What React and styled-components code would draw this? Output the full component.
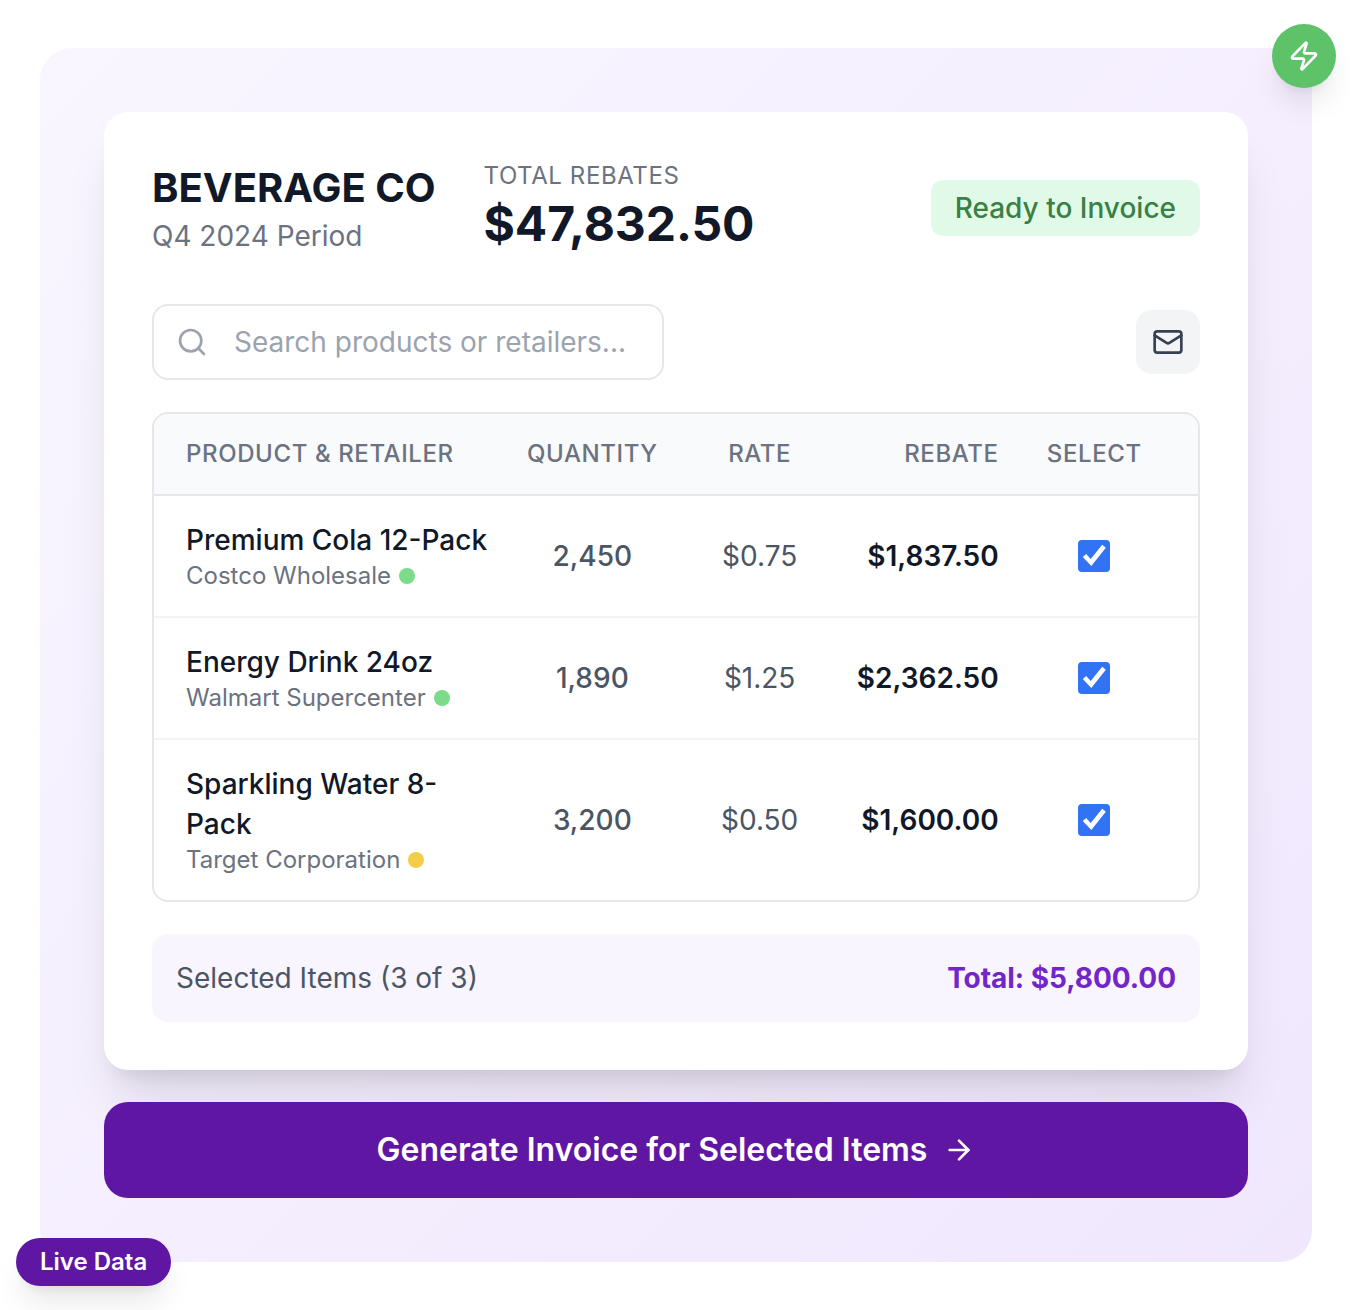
import React, { useState } from "react";
import styled, { createGlobalStyle } from "styled-components";

const GlobalStyle = createGlobalStyle`
  *, *::before, *::after { box-sizing: border-box; }
  body { margin: 0; background: #fff; font-family: Inter, "Liberation Sans", sans-serif; color: #111827; }
  button, input { font: inherit; letter-spacing: inherit; }
`;

const Page = styled.main`
  padding: 48px 46px 48px 40px;
  height: 1310px;
  overflow: hidden;
`;

const Panel = styled.section`
  position: relative;
  height: 1214px;
  padding: 64px;
  border-radius: 32px;
  background: linear-gradient(135deg, #f9f6ff, #f0e7fd);
`;

const Card = styled.article`
  height: 958px;
  padding: 48px;
  margin-bottom: 32px;
  border-radius: 24px;
  background: #fff;
  box-shadow: 0 40px 50px -10px rgba(0, 0, 0, 0.1), 0 16px 20px -12px rgba(0, 0, 0, 0.1);
`;

const Header = styled.header`
  display: flex;
  align-items: center;
  height: 96px;
  margin-bottom: 48px;
`;

const Company = styled.div`
  width: 331.5px;
`;

const CompanyName = styled.h1`
  margin: 0;
  font-size: 40px;
  line-height: 56px;
  font-weight: 700;
`;

const Period = styled.div`
  font-size: 28px;
  line-height: 40px;
  color: #6b7280;
`;

const Label = styled.div`
  font-size: 24px;
  line-height: 32px;
  letter-spacing: 0.6px;
  color: #6b7280;
`;

const Amount = styled.div`
  font-size: 48px;
  line-height: 64px;
  font-weight: 700;
  letter-spacing: -0.08px;
`;

const Status = styled.span`
  margin-left: auto;
  padding: 8px 24px;
  border-radius: 12px;
  background: #e1fae8;
  color: #3a7f44;
  font-size: 28px;
  line-height: 40px;
  font-weight: 500;
`;

const Toolbar = styled.div`
  display: flex;
  align-items: center;
  justify-content: space-between;
  margin-bottom: 32px;
`;

const SearchBox = styled.label`
  display: flex;
  align-items: center;
  gap: 26px;
  width: 512px;
  height: 76px;
  padding: 0 22px;
  border: 2px solid #e5e7eb;
  border-radius: 16px;
  color: #9ca3af;
`;

const SearchInput = styled.input`
  flex: 1;
  min-width: 0;
  padding: 0;
  border: 0;
  outline: 0;
  background: transparent;
  font-size: 28px;
  color: #111827;
  &::placeholder { color: #9ca3af; opacity: 1; }
`;

const MailButton = styled.button`
  display: grid;
  place-items: center;
  width: 64px;
  height: 64px;
  padding: 0;
  border: 0;
  border-radius: 16px;
  background: #f3f4f6;
  color: #374151;
`;

const Table = styled.div`
  overflow: hidden;
  border: 2px solid #e5e7eb;
  border-radius: 16px;
  margin-bottom: 32px;
`;

const Row = styled.div`
  display: grid;
  grid-template-columns: 310.67px repeat(4, 143.33px);
  column-gap: 24px;
  align-items: center;
  height: ${(p) => p.$height}px;
  padding: 0 32px;
  border-bottom: ${(p) => (p.$last ? "0" : "2px solid #f3f4f6")};
`;

const HeadRow = styled(Row)`
  background: #f9fafb;
  border-bottom-color: #e5e7eb;
  color: #6b7280;
  font-size: 24px;
  line-height: 32px;
  font-weight: 500;
  letter-spacing: 0.6px;
`;

const Cell = styled.div`
  text-align: ${(p) => p.$align || "center"};
`;

const Item = styled.div`
  padding-right: 6px;
`;

const Product = styled.div`
  font-size: 28px;
  line-height: 40px;
  font-weight: 500;
`;

const Retailer = styled.div`
  display: flex;
  align-items: center;
  gap: 8px;
  font-size: 24px;
  line-height: 32px;
  color: #6b7280;
`;

const Dot = styled.span`
  width: 16px;
  height: 16px;
  border-radius: 50%;
  background: ${(p) => p.$color};
`;

const Value = styled(Cell)`
  font-size: 28px;
  line-height: 40px;
  font-weight: ${(p) => p.$weight};
  color: ${(p) => p.$color};
`;

const CheckLabel = styled.label`
  display: grid;
  width: 32px;
  height: 32px;
  margin: 0 auto;
  & > * { grid-area: 1 / 1; }
`;

const CheckInput = styled.input`
  appearance: none;
  width: 32px;
  height: 32px;
  margin: 0;
  border: 2px solid #767676;
  border-radius: 4px;
  background: #fff;
  &:checked { border-color: #3273f6; background: #3273f6; }
`;

const CheckMark = styled.svg`
  z-index: 1;
  pointer-events: none;
`;

const Summary = styled.div`
  display: flex;
  align-items: center;
  justify-content: space-between;
  height: 88px;
  padding: 0 24px;
  border-radius: 16px;
  background: #f8f5ff;
  font-size: 28px;
  line-height: 40px;
  color: #4b5563;
`;

const Total = styled.strong`
  font-weight: 700;
  letter-spacing: -0.04px;
  color: #7326c8;
`;

const Generate = styled.button`
  display: flex;
  align-items: center;
  justify-content: center;
  gap: 16px;
  width: 100%;
  height: 96px;
  padding: 0;
  border: 0;
  border-radius: 24px;
  background: #5f16a3;
  color: #fff;
  font-size: 32px;
  line-height: 48px;
  font-weight: 600;
`;

const Floating = styled.div`
  position: absolute;
  color: #fff;
  box-shadow: 0 20px 30px -6px rgba(0, 0, 0, 0.1), 0 8px 12px -8px rgba(0, 0, 0, 0.1);
`;

const Bolt = styled(Floating)`
  top: -24px;
  right: -24px;
  display: grid;
  place-items: center;
  width: 64px;
  height: 64px;
  border-radius: 50%;
  background: #5ec269;
`;

const Live = styled(Floating)`
  left: -24px;
  bottom: -24px;
  padding: 0 24px;
  border-radius: 24px;
  background: #5f16a3;
  font-size: 24px;
  line-height: 48px;
  font-weight: 600;
`;

const Icon = ({ size, children }) => (
  <svg width={size} height={size} viewBox="0 0 24 24" fill="none" stroke="currentColor" strokeWidth="2" strokeLinecap="round" strokeLinejoin="round">
    {children}
  </svg>
);

const Checkbox = ({ checked, onChange }) => (
  <CheckLabel>
    <CheckInput type="checkbox" checked={checked} onChange={onChange} />
    {checked && (
      <CheckMark width="32" height="32" viewBox="0 0 32 32" fill="#fff">
        <path d="M4.8 17 8.2 14 12.7 19 24.2 4.8 27.8 7.8 13.3 26z" />
      </CheckMark>
    )}
  </CheckLabel>
);

const items = [
  { name: "Premium Cola 12-Pack", retailer: "Costco Wholesale", dot: "#7adb89", qty: "2,450", rate: "$0.75", rebate: "$1,837.50", height: 122 },
  { name: "Energy Drink 24oz", retailer: "Walmart Supercenter", dot: "#7adb89", qty: "1,890", rate: "$1.25", rebate: "$2,362.50", height: 122 },
  { name: "Sparkling Water 8-Pack", retailer: "Target Corporation", dot: "#f2cd48", qty: "3,200", rate: "$0.50", rebate: "$1,600.00", height: 160 },
];

export default function App() {
  const [checked, setChecked] = useState([true, true, true]);
  const toggle = (i) => setChecked(checked.map((c, j) => (i === j ? !c : c)));
  return (
    <>
      <GlobalStyle />
      <Page>
        <Panel>
          <Card>
            <Header>
              <Company>
                <CompanyName>BEVERAGE CO</CompanyName>
                <Period>Q4 2024 Period</Period>
              </Company>
              <div>
                <Label>TOTAL REBATES</Label>
                <Amount>$47,832.50</Amount>
              </div>
              <Status>Ready to Invoice</Status>
            </Header>
            <Toolbar>
              <SearchBox>
                <Icon size={32}><circle cx="11" cy="11" r="8" /><path d="m21 21-4.3-4.3" /></Icon>
                <SearchInput placeholder="Search products or retailers..." />
              </SearchBox>
              <MailButton aria-label="Email">
                <Icon size={32}><rect width="20" height="16" x="2" y="4" rx="2" /><path d="m22 7-8.97 5.7a1.94 1.94 0 0 1-2.06 0L2 7" /></Icon>
              </MailButton>
            </Toolbar>
            <Table>
              <HeadRow $height={82}>
                <Cell $align="left">PRODUCT &amp; RETAILER</Cell>
                <Cell>QUANTITY</Cell>
                <Cell>RATE</Cell>
                <Cell $align="right">REBATE</Cell>
                <Cell>SELECT</Cell>
              </HeadRow>
              {items.map((item, i) => (
                <Row key={item.name} $height={item.height} $last={i === items.length - 1}>
                  <Item>
                    <Product>{item.name}</Product>
                    <Retailer>{item.retailer}<Dot $color={item.dot} /></Retailer>
                  </Item>
                  <Value $weight={500} $color="#4b5563">{item.qty}</Value>
                  <Value $weight={400} $color="#4b5563">{item.rate}</Value>
                  <Value $align="right" $weight={600} $color="#111827">{item.rebate}</Value>
                  <Checkbox checked={checked[i]} onChange={() => toggle(i)} />
                </Row>
              ))}
            </Table>
            <Summary>
              <span>Selected Items ({checked.filter(Boolean).length} of {items.length})</span>
              <Total>Total: $5,800.00</Total>
            </Summary>
          </Card>
          <Generate>
            Generate Invoice for Selected Items
            <Icon size={32}><path d="M5 12h14" /><path d="m12 5 7 7-7 7" /></Icon>
          </Generate>
          <Bolt>
            <Icon size={32}>
              <path d="M4 14a1 1 0 0 1-.78-1.63l9.9-10.2a.5.5 0 0 1 .86.46l-1.92 6.02A1 1 0 0 0 13 10h7a1 1 0 0 1 .78 1.63l-9.9 10.2a.5.5 0 0 1-.86-.46l1.92-6.02A1 1 0 0 0 11 14z" />
            </Icon>
          </Bolt>
          <Live>Live Data</Live>
        </Panel>
      </Page>
    </>
  );
}
